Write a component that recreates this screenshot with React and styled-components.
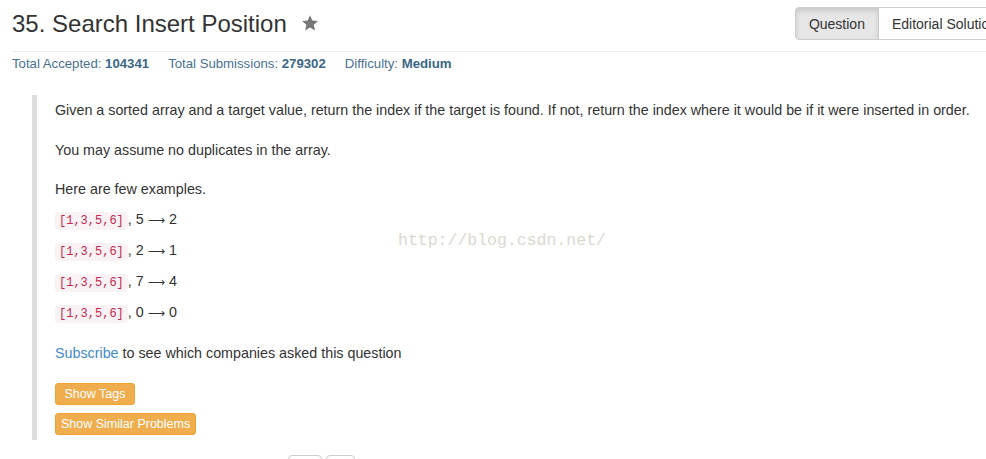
import styled, { createGlobalStyle } from "styled-components";

const Global = createGlobalStyle`
  body {
    margin: 0;
    background: #fff;
    overflow: hidden;
    font-family: "Liberation Sans", Arial, sans-serif;
    color: #333;
  }
`;

const examples = [
  ["5", "2"],
  ["2", "1"],
  ["7", "4"],
  ["0", "0"],
];

export default function App() {
  return (
    <>
      <Global />
      <Page>
        <Header>
          <Title>35. Search Insert Position</Title>
          <Star viewBox="0 0 24 24">
            <path d="M12 1.5l3.2 7.1 7.6.7-5.8 5.1 1.8 7.6L12 18l-6.6 4 1.8-7.6L1.4 9.3l7.6-.7z" />
          </Star>
          <Tabs>
            <Tab $active>Question</Tab>
            <Tab>Editorial Solution</Tab>
          </Tabs>
        </Header>
        <Stats>
          <span>Total Accepted: <b>104341</b></span>
          <span>Total Submissions: <b>279302</b></span>
          <span>Difficulty: <b>Medium</b></span>
        </Stats>
        <Quote>
          <Para $gap={20}>
            Given a sorted array and a target value, return the index if the target is found. If not, return the index where it would be if it were inserted in order.
          </Para>
          <Para $gap={19}>You may assume no duplicates in the array.</Para>
          <Para $gap={10}>Here are few examples.</Para>
          {examples.map(([a, b], i) => (
            <Para key={i} $gap={i === examples.length - 1 ? 20 : 10}>
              <Code>[1,3,5,6]</Code>, {a} <Arrow>⟶</Arrow> {b}
            </Para>
          ))}
          <Para $gap={20}>
            <Link>Subscribe</Link> to see which companies asked this question
          </Para>
          <Btn $minW={80}>Show Tags</Btn>
          <Btn>Show Similar Problems</Btn>
        </Quote>
        <Pager>
          <PageBtn $w={32} />
          <PageBtn $w={27} />
        </Pager>
      </Page>
      <Watermark>http://blog.csdn.net/</Watermark>
    </>
  );
}

const Page = styled.div`
  width: 999px;
  padding: 0 0 0 12px;
`;

const Header = styled.div`
  display: flex;
  align-items: center;
  padding-top: 7px;
  height: 33px;
  padding-bottom: 11px;
  border-bottom: 1px solid #eee;
`;

const Title = styled.h1`
  margin: 0;
  font-size: 24px;
  font-weight: 400;
  color: #333;
`;

const Star = styled.svg`
  width: 18px;
  height: 18px;
  fill: #777;
  margin-left: 14px;
  margin-top: -1px;
`;

const Tabs = styled.div`
  display: flex;
  margin-left: auto;
  height: 33px;
`;

const Tab = styled.div`
  display: flex;
  align-items: center;
  padding: 0 13px;
  font-size: 14px;
  color: #333;
  border: 1px solid #ccc;
  background: ${(p) => (p.$active ? "#e6e6e6" : "#fff")};
  box-shadow: ${(p) => (p.$active ? "inset 0 3px 5px rgba(0,0,0,0.125)" : "none")};
  border-radius: ${(p) => (p.$active ? "4px 0 0 4px" : "0 4px 4px 0")};
  white-space: nowrap;
  & + & {
    margin-left: -1px;
  }
`;

const Stats = styled.div`
  display: flex;
  gap: 19px;
  font-size: 13.2px;
  color: #4a7090;
  padding-top: 4px;
  line-height: 16px;
  b {
    color: #3b6685;
  }
`;

const Quote = styled.div`
  margin: 23px 0 0 20px;
  padding: 5px 20px 5px 18px;
  border-left: 5px solid #ddd;
`;

const Para = styled.p`
  margin: 0 0 ${(p) => p.$gap}px;
  font-size: 14.3px;
  line-height: 20px;
  color: #333;
`;

const Code = styled.code`
  display: inline-block;
  font-family: "Liberation Mono", "DejaVu Sans Mono", monospace;
  font-size: 12px;
  line-height: 14px;
  color: #c7254e;
  background: #f9f2f4;
  padding: 2px 4px;
  border-radius: 4px;
`;

const Arrow = styled.span`
  font-family: "DejaVu Sans", sans-serif;
  font-size: 12px;
`;

const Link = styled.a`
  color: #428bca;
  cursor: pointer;
`;

const Btn = styled.div`
  display: block;
  width: fit-content;
  min-width: ${(p) => p.$minW || 0}px;
  box-sizing: border-box;
  text-align: center;
  font-size: 12.5px;
  line-height: 16px;
  color: #fff;
  background: #f0ad4e;
  border: 1px solid #eea236;
  border-radius: 3px;
  padding: 2px 5px;
  margin-bottom: 8px;
  &:last-child {
    margin-bottom: 0;
  }
`;

const Pager = styled.div`
  display: flex;
  gap: 4px;
  margin: 15px 0 0 276px;
`;

const PageBtn = styled.div`
  width: ${(p) => p.$w}px;
  height: 30px;
  border: 1px solid #ccc;
  border-radius: 4px;
`;

const Watermark = styled.div`
  position: absolute;
  left: 398px;
  top: 231px;
  font-family: "Liberation Mono", monospace;
  font-size: 16.5px;
  color: #dbd8d0;
  pointer-events: none;
`;
